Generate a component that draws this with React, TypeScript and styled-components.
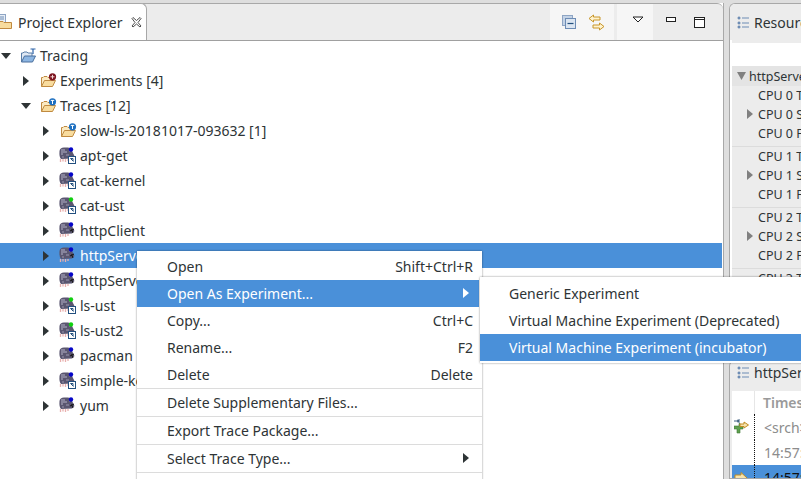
import React from "react"
import styled, { createGlobalStyle } from "styled-components"

const Global = createGlobalStyle`
  html, body { margin: 0; padding: 0; height: 100%; overflow: hidden; }
  body { background: #dcdcdc; font-family: "Noto Sans", sans-serif; font-size: 14px; color: #2e3436; }
  * { box-sizing: border-box; }
  svg { flex-shrink: 0; display: block; }
`

const selected = "#4a90d9"

type TraceIcon = "mole" | "moleLink" | "moleGreenLink"

interface TraceRow {
  name: string
  icon: TraceIcon
  active?: boolean
}

const traces: TraceRow[] = [
  { name: "apt-get", icon: "moleLink" },
  { name: "cat-kernel", icon: "moleLink" },
  { name: "cat-ust", icon: "moleGreenLink" },
  { name: "httpClient", icon: "mole" },
  { name: "httpServer", icon: "mole", active: true },
  { name: "httpServer", icon: "mole" },
  { name: "ls-ust", icon: "moleGreenLink" },
  { name: "ls-ust2", icon: "moleGreenLink" },
  { name: "pacman", icon: "mole" },
  { name: "simple-kernel", icon: "moleLink" },
  { name: "yum", icon: "mole" },
]

const ArrowRight = ({ color = "#2e3436" }: { color?: string }) => (
  <svg width="6" height="10" viewBox="0 0 6 10"><path d="M0 0 L6 5 L0 10 Z" fill={color} /></svg>
)

const ArrowDown = () => (
  <svg width="10" height="6" viewBox="0 0 10 6"><path d="M0 0 H10 L5 6 Z" fill="#2e3436" /></svg>
)

const ArrowDownGrey = () => (
  <svg width="9" height="8" viewBox="0 0 9 8"><path d="M0 0 H9 L4.5 8 Z" fill="#808080" /></svg>
)

const OpenFolder = ({ badge }: { badge?: "red" | "blue" }) => (
  <svg width="18" height="16" viewBox="0 0 18 16">
    <path d="M1.5 13.5 V4.5 H3 L4 3.5 H7 L8 4.5 H12 V7" fill="#fbeac2" stroke="#c08a40" />
    <path d="M1.5 13.5 L4.5 7.5 H15.5 L12.5 13.5 Z" fill="#f8dc9e" stroke="#c08a40" />
    {badge === "red" && <circle cx="12.5" cy="3.8" r="3.6" fill="#7c1420" />}
    {badge === "red" && <path d="M10.5 3.8 H14.5 M12.5 1.8 V5.8" stroke="#f3d6d6" strokeWidth="1" />}
    {badge === "blue" && <circle cx="12.5" cy="3.8" r="3.6" fill="#1d6fc0" />}
    {badge === "blue" && <path d="M10.8 2.4 H14.2 M12.5 2.4 V6" stroke="#fff" strokeWidth="1" />}
  </svg>
)

const ProjectFolder = () => (
  <svg width="17" height="16" viewBox="0 0 17 16">
    <path d="M1.5 14 V5 H3 L4 4 H7 L8 5 H12 V8" fill="#dfe8f3" stroke="#5a7ea8" />
    <path d="M1.5 14 L4.5 8 H15.5 L12.5 14 Z" fill="#8db6e2" stroke="#4a6f9c" />
    <path d="M10.5 1 H15.5 M13 1 V6" stroke="#2b62a8" strokeWidth="1.2" />
  </svg>
)

const Mole = ({ kind }: { kind: TraceIcon }) => (
  <MoleSvg width="18" height="19" viewBox="0 0 18 19">
    <path d="M0.5 5 Q1 1.5 5 1.5 H9 Q12.5 2 13 5 L15.5 10 L13 12.5 L2 13 Q0 11 0.5 5 Z" fill="#5a5670" />
    <path d="M2 3 H6 V5 H8 V7 H4 V9 H2 Z" fill="#87849c" />
    <path d="M7 8 H10 V10 H7 Z M3 10 H5 V12 H3 Z M10 4 H11 V6 H10 Z" fill="#7a7790" />
    <path d="M1.5 13 V16 M4 13 V15.5 M6.5 13 V16 M9 13 V15" stroke="#e8b0ae" strokeWidth="1.3" />
    <circle cx="12" cy="3.5" r="2.2" fill={kind === "moleGreenLink" ? "#10d010" : "#0505c8"} />
    {kind === "mole" && <path d="M11 10 L15 8 M12.5 8.5 L14 12" stroke="#111" strokeWidth="1" />}
    {kind !== "mole" && (
      <g>
        <rect x="9.5" y="10.5" width="7" height="7" fill="#fff" stroke="#23507f" />
        <path d="M11.5 12.5 H14 V15 M11.5 12.5 L14.5 15.5" stroke="#23507f" strokeWidth="1" fill="none" />
      </g>
    )}
  </MoleSvg>
)

const ExplorerIcon = () => (
  <svg width="16" height="16" viewBox="0 0 16 16">
    <rect x="0.5" y="0.5" width="8" height="9" fill="#e8eef6" stroke="#8ea5c4" />
    <path d="M2 3 H7 M2 5 H7" stroke="#6d8cb5" />
    <path d="M2.5 14.5 V7.5 H6 L7 8.5 H14.5 V14.5 Z" fill="#f8dc9e" stroke="#c08a40" />
  </svg>
)

const CloseIcon = () => (
  <svg width="11" height="11" viewBox="0 0 11 11">
    <path d="M1 1.5 L2 0.5 L5.5 3.5 L9 0.5 L10 1.5 L7 5.5 L10 9 L9 10 L5.5 7 L2 10 L1 9 L4 5.5 Z" fill="#fff" stroke="#3c3c3c" strokeWidth="0.9" />
  </svg>
)

const CollapseIcon = () => (
  <svg width="14" height="14" viewBox="0 0 14 14">
    <rect x="0.5" y="0.5" width="10" height="10" fill="#c4d3e6" stroke="#8ea5c4" />
    <rect x="3.5" y="3.5" width="10" height="10" fill="#dbe5f1" stroke="#6d8cb5" />
    <path d="M5.5 8.5 H11.5" stroke="#23507f" strokeWidth="1.2" />
  </svg>
)

const LinkIcon = () => (
  <svg width="17" height="17" viewBox="0 0 17 17">
    <path d="M1 4.5 L5.5 1 V3 H12 V6 H5.5 V8 Z" fill="#fff3cf" stroke="#c8962a" />
    <path d="M16 12.5 L11.5 9 V11 H5 V14 H11.5 V16 Z" fill="#fff3cf" stroke="#c8962a" />
  </svg>
)

const MenuDownIcon = () => (
  <svg width="12" height="7" viewBox="0 0 12 7"><path d="M1 1 H11 L6 6 Z" fill="#fff" stroke="#222" /></svg>
)

const MinimizeIcon = () => (
  <svg width="10" height="5" viewBox="0 0 10 5"><rect x="0.5" y="0.5" width="9" height="4" fill="#fff" stroke="#222" /></svg>
)

const MaximizeIcon = () => (
  <svg width="11" height="11" viewBox="0 0 11 11">
    <rect x="0.5" y="0.5" width="10" height="10" fill="#fff" stroke="#222" />
    <path d="M0.5 2.5 H10.5" stroke="#222" />
  </svg>
)

const OutlineIcon = () => (
  <svg width="12" height="13" viewBox="0 0 12 13">
    <path d="M1 1 H3 V3 H1 Z M1 6 H3 V8 H1 Z M1 10 H3 V12 H1 Z" fill="#7f9cc4" stroke="#5e7fa8" strokeWidth="0.6" />
    <path d="M5 2 H12 M5 7 H12 M5 11 H12" stroke="#6d8cb5" />
  </svg>
)

const SearchRowIcon = () => (
  <svg width="15" height="16" viewBox="0 0 15 16">
    <path d="M0 2 H5 M5 0 V4 M3 1 L5 2 L3 3" stroke="#3c5f7f" fill="none" />
    <path d="M2 7 H5 V4.5 H6 V7 H9 V10 H6 V14 H3 V10 H0 V7 Z" fill="#5fa04e" stroke="#3f7a36" strokeWidth="0.6" />
    <path d="M6 5 H10 V3 L14.5 6 L10 9 V7.5 H6 Z" fill="#f6e3ae" stroke="#c08c22" />
  </svg>
)

const SelectedRowIcon = () => (
  <svg width="14" height="12" viewBox="0 0 14 12">
    <path d="M1 3 H7 V0.5 L13 6 L7 11.5 V9 H1 Z" fill="#f6e3ae" stroke="#c08c22" />
  </svg>
)

export default function App() {
  return (
    <Page>
      <Global />
      <ExplorerPane>
        <ViewHeader>
          <ActiveTab>
            <TabIconSlot><ExplorerIcon /></TabIconSlot>
            <TabTitle>Project Explorer</TabTitle>
            <CloseIcon />
          </ActiveTab>
          <Toolbars>
            <ToolGroup $width={64} $pad={12}>
              <CollapseIcon />
              <LinkIcon />
            </ToolGroup>
            <ToolGroup $width={36} $pad={15}>
              <MenuDownIcon />
            </ToolGroup>
          </Toolbars>
          <WindowControls>
            <MinimizeIcon />
            <MaximizeIcon />
          </WindowControls>
        </ViewHeader>
        <Tree>
          <Row $level={0}>
            <Twistie><ArrowDown /></Twistie>
            <IconCell><ProjectFolder /></IconCell>
            <Label>Tracing</Label>
          </Row>
          <Row $level={1}>
            <Twistie><ArrowRight /></Twistie>
            <IconCell><OpenFolder badge="red" /></IconCell>
            <Label>Experiments [4]</Label>
          </Row>
          <Row $level={1}>
            <Twistie><ArrowDown /></Twistie>
            <IconCell><OpenFolder badge="blue" /></IconCell>
            <Label>Traces [12]</Label>
          </Row>
          <Row $level={2}>
            <Twistie><ArrowRight /></Twistie>
            <IconCell><OpenFolder badge="blue" /></IconCell>
            <Label>slow-ls-20181017-093632 [1]</Label>
          </Row>
          {traces.map((trace, index) => (
            <Row key={trace.name + index} $level={2} $active={trace.active}>
              <Twistie><ArrowRight /></Twistie>
              <IconCell><Mole kind={trace.icon} /></IconCell>
              <Label>{trace.name}</Label>
            </Row>
          ))}
        </Tree>
      </ExplorerPane>

      <SideColumn>
        <ResourcesPane>
          <SideHeader>
            <OutlineIcon />
            <SideTitle>Resources</SideTitle>
          </SideHeader>
          <SideBlank />
          <ResourceHead>
            <ArrowDownGrey />
            httpServer
          </ResourceHead>
          {[0, 1, 2, 3].map(cpu => (
            <CpuGroup key={cpu}>
              <CpuRow>CPU {cpu} Threads</CpuRow>
              <CpuRow>
                <CpuArrow><ArrowRight color="#808080" /></CpuArrow>
                CPU {cpu} States
              </CpuRow>
              <CpuRow>CPU {cpu} Freq</CpuRow>
            </CpuGroup>
          ))}
        </ResourcesPane>
        <EventsPane>
          <EventsHeader>
            <OutlineIcon />
            <SideTitle>httpServer</SideTitle>
          </EventsHeader>
          <EventsTable>
            <EventRow $height={23}>
              <MarginCell />
              <HeadCell>Timestamp</HeadCell>
            </EventRow>
            <EventRow $height={26}>
              <MarginCell $dotted><SearchRowIcon /></MarginCell>
              <GreyCell>&lt;srch&gt;</GreyCell>
            </EventRow>
            <EventRow $height={25}>
              <MarginCell $dotted />
              <GreyCell>14:57:10</GreyCell>
            </EventRow>
            <EventRow $height={25} $active>
              <MarginCell $dotted><SelectedRowIcon /></MarginCell>
              <DarkCell>14:57:10</DarkCell>
            </EventRow>
          </EventsTable>
        </EventsPane>
      </SideColumn>

      <ContextMenu>
        <MenuItem><span>Open</span><Shortcut>Shift+Ctrl+R</Shortcut></MenuItem>
        <MenuItem $active>
          <span>Open As Experiment...</span>
          <SubArrow><ArrowRight color="#fff" /></SubArrow>
        </MenuItem>
        <MenuItem><span>Copy...</span><Shortcut>Ctrl+C</Shortcut></MenuItem>
        <MenuItem><span>Rename...</span><Shortcut>F2</Shortcut></MenuItem>
        <MenuItem><span>Delete</span><Shortcut>Delete</Shortcut></MenuItem>
        <Separator />
        <MenuItem><span>Delete Supplementary Files...</span></MenuItem>
        <Separator />
        <MenuItem><span>Export Trace Package...</span></MenuItem>
        <Separator />
        <MenuItem>
          <span>Select Trace Type...</span>
          <SubArrow><ArrowRight /></SubArrow>
        </MenuItem>
        <Separator />
      </ContextMenu>

      <SubMenu>
        <MenuItem $indent={29}><span>Generic Experiment</span></MenuItem>
        <MenuItem $indent={29}><span>Virtual Machine Experiment (Deprecated)</span></MenuItem>
        <MenuItem $indent={29} $active><span>Virtual Machine Experiment (incubator)</span></MenuItem>
      </SubMenu>
    </Page>
  )
}

const MoleSvg = styled("svg")`
  margin-left: -1px;
`

const Page = styled("div")`
  position: relative;
  width: 801px;
  height: 479px;
  overflow: hidden;
  display: flex;
  gap: 5px;
  padding-top: 3px;
  background: #dedede;
`

const ExplorerPane = styled("section")`
  width: 724px;
  height: 476px;
  flex-shrink: 0;
  display: flex;
  flex-direction: column;
  background: #fff;
  border-right: 1px solid #a8a8a8;
`

const ViewHeader = styled("header")`
  height: 38px;
  display: flex;
  background: #ececec;
  border-top: 1px solid #a8a8a8;
  border-bottom: 1px solid #a0a0a0;
  border-top-right-radius: 6px;
`

const ActiveTab = styled("div")`
  width: 147px;
  height: 37px;
  margin-top: -1px;
  display: flex;
  align-items: center;
  background: #fff;
  border-right: 1px solid #a8a8a8;
  border-top: 1px solid #a8a8a8;
  border-top-right-radius: 6px;
`

const TabIconSlot = styled("span")`
  width: 18px;
  margin-left: -3px;
  margin-right: 3px;
  display: flex;
`

const TabTitle = styled("span")`
  width: 113px;
  font-size: 14px;
  white-space: nowrap;
`

const Toolbars = styled("div")`
  margin-left: 403px;
  display: flex;
  gap: 3px;
`

const ToolGroup = styled("div")<{ $width: number; $pad: number }>`
  width: ${p => p.$width}px;
  height: 36px;
  display: flex;
  align-items: center;
  gap: 12px;
  padding: 0 0 ${p => (p.$pad === 15 ? 5 : 0)}px ${p => p.$pad}px;
  background: #f6f6f6;
`

const WindowControls = styled("div")`
  display: flex;
  align-items: flex-start;
  gap: 18px;
  padding: 13px 0 0 13px;
`

const Tree = styled("div")`
  padding-top: 2px;
  padding-right: 1px;
  flex: 1;
`

const Row = styled("div")<{ $level: number; $active?: boolean }>`
  height: 25px;
  display: flex;
  align-items: center;
  padding-left: ${p => p.$level * 20}px;
  background: ${p => (p.$active ? selected : "transparent")};
  color: ${p => (p.$active ? "#fff" : "#2e3436")};
`

const Twistie = styled("span")`
  width: 20px;
  display: flex;
  justify-content: center;
  padding-right: 9px;
`

const IconCell = styled("span")`
  width: 20px;
  display: flex;
  justify-content: flex-start;
`

const Label = styled("span")`
  font-size: 14px;
  white-space: nowrap;
`

const SideColumn = styled("div")`
  flex: 1;
  min-width: 0;
  display: flex;
  flex-direction: column;
  gap: 5px;
`

const ResourcesPane = styled("section")`
  height: 352px;
  flex-shrink: 0;
  overflow: hidden;
  background: #fff;
  border: 1px solid #a8a8a8;
  border-right: none;
  border-top-left-radius: 6px;
`

const SideHeader = styled("header")`
  height: 36px;
  display: flex;
  align-items: center;
  gap: 5px;
  padding-left: 7px;
  background: #ececec;
`

const SideTitle = styled("span")`
  font-size: 14px;
  white-space: nowrap;
`

const SideBlank = styled("div")`
  height: 26px;
  margin-left: 2px;
  background: #fff;
  border-top: 3px solid #ececec;
`

const ResourceHead = styled("div")`
  height: 20px;
  margin-left: 2px;
  padding-left: 5px;
  display: flex;
  align-items: center;
  gap: 3px;
  font-size: 12.5px;
  white-space: nowrap;
  background: #e4e4e4;
`

const CpuGroup = styled("div")`
  padding: 0 0 3px 26px;
  margin-left: 2px;
  background: #ececec;
  border-bottom: 1px solid #dcdcdc;
  font-size: 12.5px;
`

const CpuRow = styled("div")`
  position: relative;
  height: 19px;
  line-height: 19px;
  white-space: nowrap;
`

const CpuArrow = styled("span")`
  position: absolute;
  left: -11px;
  top: 4px;
`

const EventsPane = styled("section")`
  flex: 1;
  overflow: hidden;
  background: #ececec;
  border: 1px solid #a8a8a8;
  border-right: none;
  border-top-left-radius: 6px;
`

const EventsHeader = styled("header")`
  height: 30px;
  display: flex;
  align-items: center;
  gap: 5px;
  padding-left: 7px;
  padding-bottom: 8px;
`

const EventsTable = styled("div")`
  margin-left: 2px;
  background: #fff;
`

const EventRow = styled("div")<{ $height: number; $active?: boolean }>`
  height: ${p => p.$height}px;
  display: flex;
  align-items: center;
  background: ${p => (p.$active ? selected : "transparent")};
`

const MarginCell = styled("div")<{ $dotted?: boolean }>`
  width: 23px;
  height: 100%;
  flex-shrink: 0;
  display: flex;
  align-items: center;
  padding-left: 2px;
  border-right: 1px ${p => (p.$dotted ? "dotted #111" : "solid #e6e6e6")};
`

const HeadCell = styled("div")`
  padding-left: 8px;
  font-size: 14px;
  font-weight: 600;
  color: #9a9a9a;
  white-space: nowrap;
`

const GreyCell = styled("div")`
  padding-left: 9px;
  font-size: 14px;
  color: #8c8c8c;
  white-space: nowrap;
`

const DarkCell = styled("div")`
  padding-left: 9px;
  font-size: 14px;
  color: #111;
  white-space: nowrap;
`

const ContextMenu = styled("div")`
  position: absolute;
  left: 137px;
  top: 251px;
  width: 345px;
  padding: 2px 3px 0 0;
  height: 240px;
  background: #fff;
  box-shadow: 0 0 2px rgba(0, 0, 0, 0.45);
`

const SubMenu = styled("div")`
  position: absolute;
  left: 480px;
  top: 277px;
  width: 340px;
  padding: 3px 0 2px;
  background: #fff;
  box-shadow: 0 0 2px rgba(0, 0, 0, 0.45);
`

const MenuItem = styled("div")<{ $active?: boolean; $indent?: number }>`
  height: 27px;
  display: flex;
  align-items: center;
  justify-content: space-between;
  padding: 0 6px 1px ${p => p.$indent ?? 30}px;
  font-size: 14px;
  white-space: nowrap;
  background: ${p => (p.$active ? selected : "transparent")};
  color: ${p => (p.$active ? "#fff" : "#2e3436")};
`

const Shortcut = styled("span")`
  color: #2e3436;
`

const SubArrow = styled("span")`
  display: flex;
  padding-right: 4px;
`

const Separator = styled("div")`
  height: 1px;
  margin-right: -3px;
  background: #dcdcdc;
`
